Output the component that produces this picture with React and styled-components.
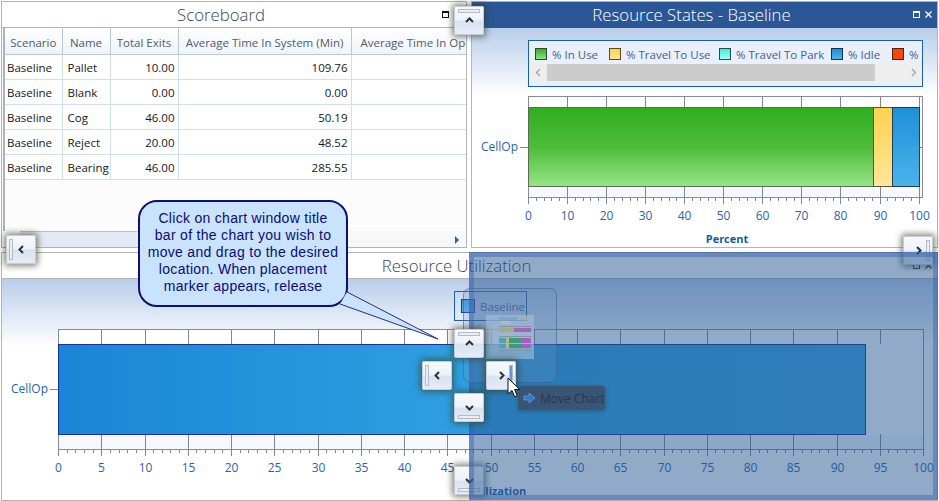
import React from 'react';
import styled, { createGlobalStyle } from 'styled-components';

const UI_FONT = '"Open Sans", "Noto Sans", sans-serif';

const GlobalStyle = createGlobalStyle`
  html, body {
    margin: 0;
    padding: 0;
    background: #fff;
  }
  #root {
    width: 939px;
    height: 501px;
    overflow: hidden;
  }
`;

const Page = styled.div`
  position: relative;
  width: 939px;
  height: 501px;
  box-sizing: border-box;
  padding: 1px 1px 0 1px;
  display: grid;
  grid-template-columns: 470px 467px;
  grid-template-rows: 247px 249px;
  row-gap: 4px;
  font-family: ${UI_FONT};
  overflow: hidden;
`;

const Panel = styled.section`
  display: flex;
  flex-direction: column;
  min-width: 0;
  box-sizing: border-box;
  border: 1px solid #b4b4b4;
  grid-column: ${({ $wide }) => ($wide ? '1 / span 2' : 'auto')};
  margin-right: ${({ $gutter }) => ($gutter ? '4px' : '0')};
  overflow: hidden;
  background: #fff;
`;

const TitleBar = styled.header`
  position: relative;
  flex: 0 0 26px;
  box-sizing: border-box;
  padding-right: 26px;
  display: flex;
  align-items: center;
  justify-content: center;
  font-size: 16.8px;
  font-weight: 300;
  color: ${({ $active }) => ($active ? '#fff' : '#3c4450')};
  background: ${({ $active }) => ($active ? '#2b5797' : '#fff')};
  border-bottom: 1px solid ${({ $active }) => ($active ? '#2b5797' : '#b4b4b4')};
`;

const WindowIcons = styled.div`
  position: absolute;
  right: ${({ $right }) => $right}px;
  top: 9px;
  display: flex;
  gap: 5px;
  align-items: center;
`;

const ChartBody = styled.div`
  flex: 1;
  min-height: 0;
  display: flex;
  flex-direction: column;
  background: linear-gradient(#b9cde9 0, #dfe8f6 36px, #fff 68px);
`;

const TableBody = styled.div`
  flex: 1;
  min-height: 0;
  display: flex;
  flex-direction: column;
  background: #fcfcfd;
`;

const TableClip = styled.div`
  flex: 1;
  min-height: 0;
  overflow: hidden;
  margin-left: 1px;
  border-left: 2px solid #a9b2bd;
`;

const Table = styled.table`
  border-collapse: collapse;
  table-layout: fixed;
  width: 649px;
  font-size: 11.5px;
`;

const HeadCell = styled.th`
  height: 26px;
  box-sizing: border-box;
  padding: 3px 0 0;
  font-weight: 400;
  color: #4f5b6c;
  text-align: ${({ $left }) => ($left ? 'left' : 'center')};
  padding-left: ${({ $left }) => ($left ? '9px' : '0')};
  white-space: nowrap;
  overflow: hidden;
  background: linear-gradient(#fff, #eef3fb);
  border-right: 1px solid #b9c8dc;
  border-bottom: 1px solid #b9c8dc;
`;

const Cell = styled.td`
  height: 25px;
  box-sizing: border-box;
  padding: 2px 3px 0 ${({ $inset }) => $inset || 3}px;
  color: #14171c;
  background: #fff;
  white-space: nowrap;
  overflow: hidden;
  text-align: ${({ $num }) => ($num ? 'right' : 'left')};
  border-right: 1px solid #cfe0f5;
  border-bottom: 1px solid #cfe0f5;
`;

const HScroll = styled.div`
  flex: 0 0 15px;
  display: flex;
  align-items: center;
  justify-content: flex-end;
  padding-right: 6px;
  margin-left: 18px;
  background: linear-gradient(90deg, #e3eaf5 0, #e3eaf5 26%, #f6f9fc 27%);
  border-top: 1px solid #b3c0d6;
  border-image: linear-gradient(90deg, #b3c0d6 26%, transparent 27%) 1;
`;

const LegendBox = styled.div`
  flex: none;
  align-self: flex-start;
  width: 395px;
  height: 47px;
  box-sizing: border-box;
  margin: 12px 0 0 56px;
  border: 1px solid #1b5fa8;
  background: #e9f0fb;
  overflow: hidden;
`;

const LegendRow = styled.div`
  display: flex;
  align-items: center;
  height: 23px;
  padding: 3px 0 0 6px;
  box-sizing: border-box;
  white-space: nowrap;
`;

const LegendItem = styled.span`
  display: inline-flex;
  align-items: center;
  gap: 5px;
  flex: 0 0 ${({ $w }) => $w}px;
  font-size: 11.5px;
  color: #3f5f9a;
`;

const Swatch = styled.i`
  display: block;
  flex: none;
  width: ${({ $size }) => $size || 10}px;
  height: ${({ $size }) => $size || 10}px;
  border: 1px solid ${({ $edge }) => $edge};
  background: linear-gradient(${({ $from }) => $from}, ${({ $to }) => $to});
`;

const LegendScroll = styled.div`
  height: 17px;
  margin: 0 1px;
  display: flex;
  align-items: center;
  justify-content: space-between;
  background: #eee;
`;

const LegendThumb = styled.div`
  width: 329px;
  height: 17px;
  background: #ccc;
`;

const SeriesKey = styled.div`
  position: absolute;
  left: 454px;
  top: 291px;
  width: 73px;
  height: 30px;
  box-sizing: border-box;
  border: 1px solid #1b5fa8;
  display: flex;
  align-items: center;
  gap: 5px;
  padding-left: 6px;
  font-size: 11.5px;
  color: #3f5f9a;
`;

const ChartHolder = styled.div`
  flex: none;
  margin-top: ${({ $top }) => $top}px;
`;

const PlacementPreview = styled.div`
  position: absolute;
  left: 469px;
  top: 252px;
  width: 469px;
  height: 248px;
  box-sizing: border-box;
  border: 5px solid rgba(46, 92, 165, 0.72);
  background: rgba(35, 85, 145, 0.5);
  background-clip: padding-box;
`;

const CompassPlate = styled.div`
  position: absolute;
  left: 463px;
  top: 288px;
  width: 94px;
  height: 95px;
  box-sizing: border-box;
  border: 1px solid rgba(60, 95, 145, 0.55);
  border-radius: 7px;
  background: rgba(110, 150, 195, 0.22);
`;

const Thumbnail = styled.svg`
  position: absolute;
  left: 486px;
  top: 315px;
`;

const DockButton = styled.button`
  position: absolute;
  left: ${({ $x }) => $x}px;
  top: ${({ $y }) => $y}px;
  width: 30px;
  height: 29px;
  padding: 0;
  box-sizing: border-box;
  display: flex;
  align-items: center;
  justify-content: center;
  border: 1px solid #f4f6fa;
  border-radius: 2px;
  outline: 1px solid #c4ccd8;
  outline-offset: -1px;
  background: linear-gradient(#f6f8fd 0, #eef2fa 48%, #d9e2f1 52%, #e6ecf7 100%);
  box-shadow: 0 0 6px 2px rgba(55, 60, 30, 0.62);
`;

const DockBar = styled.i`
  position: absolute;
  box-sizing: border-box;
  border: 1px solid #b7bcc4;
  background: ${({ $hot }) => ($hot ? '#5f97e0' : '#e9edf4')};
  ${({ $side }) =>
    $side === 'top' ? 'left: 3px; right: 3px; top: 2px; height: 4px;' : ''}
  ${({ $side }) =>
    $side === 'bottom' ? 'left: 3px; right: 3px; bottom: 2px; height: 4px;' : ''}
  ${({ $side }) =>
    $side === 'left' ? 'top: 3px; bottom: 3px; left: 2px; width: 4px;' : ''}
  ${({ $side }) =>
    $side === 'right' ? 'top: 3px; bottom: 3px; right: 2px; width: 4px;' : ''}
`;

const MoveTip = styled.div`
  position: absolute;
  left: 518px;
  top: 386px;
  width: 87px;
  height: 24px;
  box-sizing: border-box;
  display: flex;
  align-items: center;
  gap: 4px;
  padding-left: 5px;
  border-radius: 3px;
  background: #3a5474;
  box-shadow: 0 1px 4px rgba(40, 50, 60, 0.45);
  font-size: 12px;
  color: #223a58;
`;

const Pointer = styled.svg`
  position: absolute;
  left: 507px;
  top: 377px;
`;

const Callout = styled.div`
  position: absolute;
  left: 138px;
  top: 200px;
  width: 210px;
  height: 107px;
  box-sizing: border-box;
  padding-bottom: 3px;
  display: flex;
  align-items: center;
  justify-content: center;
  text-align: center;
  border: 2px solid #10106e;
  border-radius: 19px;
  background: #c9e3fc;
  font-family: "Liberation Sans", Arial, sans-serif;
  font-size: 14px;
  letter-spacing: 0.3px;
  line-height: 17px;
  color: #0c0c72;
`;

const CalloutTail = styled.svg`
  position: absolute;
  left: 336px;
  top: 288px;
`;

const rows = [
  ['Baseline', 'Pallet', '10.00', '109.76'],
  ['Baseline', 'Blank', '0.00', '0.00'],
  ['Baseline', 'Cog', '46.00', '50.19'],
  ['Baseline', 'Reject', '20.00', '48.52'],
  ['Baseline', 'Bearing', '46.00', '285.55'],
];

const legend = [
  ['% In Use', 74, '#35ab25', '#93e183', '#2c4a28'],
  ['% Travel To Use', 110, '#ffd24d', '#ffe596', '#5a4a20'],
  ['% Travel To Park', 112, '#3fe8dc', '#a2fff8', '#2a4a4a'],
  ['% Idle', 61, '#1f8fd8', '#4ab4ea', '#12304c'],
  ['%', 30, '#f5460c', '#f5460c', '#55200c'],
];

const RestoreIcon = ({ color }) => (
  <svg width="7" height="7" viewBox="0 0 7 7" style={{ display: 'block' }}>
    <rect x="0.5" y="0.5" width="6" height="6" fill="none" stroke={color} />
    <rect x="0" y="0" width="7" height="2" fill={color} />
  </svg>
);

const CloseIcon = ({ color }) => (
  <svg width="7" height="7" viewBox="0 0 7 7" style={{ display: 'block' }}>
    <path d="M.5.5l6 6M6.5.5l-6 6" stroke={color} strokeWidth="1.3" fill="none" />
  </svg>
);

const Chevron = ({ dir }) => {
  const paths = {
    up: 'M1 6 L4.5 2.5 L8 6',
    down: 'M1 3 L4.5 6.5 L8 3',
    left: 'M6 1 L2.5 4.5 L6 8',
    right: 'M3 1 L6.5 4.5 L3 8',
  };
  return (
    <svg width="9" height="9" viewBox="0 0 9 9">
      <path d={paths[dir]} fill="none" stroke="#2c3138" strokeWidth="2" />
    </svg>
  );
};

const Dock = ({ x, y, dir, side, hot }) => (
  <DockButton $x={x} $y={y} aria-label={`Dock ${side}`}>
    <DockBar $side={side} $hot={hot} />
    <Chevron dir={dir} />
  </DockButton>
);

// horizontal bar chart: ox is the plot's left edge, the plot starts at the svg's top
const BarChart = ({ w, h, ox, plotW, plotH, band, step, unit, segments, horizontal, axisTitle, titleShift }) => {
  const max = 100;
  const majors = [];
  for (let v = 0; v <= max; v += step) majors.push(v);
  const minors = [];
  for (let v = 0; v < max; v += step / 5) {
    if (Math.round(v / (step / 5)) % 5 !== 0) minors.push(v);
  }
  const px = (v) => Math.round(ox + v * unit) + 0.5;
  const bottom = plotH;
  const barTop = band;
  const barBottom = bottom - band;
  const mid = Math.round((barTop + barBottom) / 2);

  return (
    <svg width={w} height={h} style={{ display: 'block', fontFamily: UI_FONT }}>
      <defs>
        {segments.map((s) => (
          <linearGradient key={s.id} id={s.id} x1="0" y1="0" x2={horizontal ? '1' : '0'} y2={horizontal ? '0' : '1'}>
            {s.stops.map(([o, c]) => (
              <stop key={o} offset={o} stopColor={c} />
            ))}
          </linearGradient>
        ))}
      </defs>
      <rect x={ox + 0.5} y={0.5} width={plotW} height={band} fill="#fff" />
      <rect x={ox + 0.5} y={barBottom + 0.5} width={plotW} height={band} fill="#f5f9fd" />
      {majors.map((v) => (
        <g key={v} stroke="#7f8790">
          <line x1={px(v)} x2={px(v)} y1={0} y2={barTop} />
          <line x1={px(v)} x2={px(v)} y1={barBottom} y2={bottom + 7} />
        </g>
      ))}
      {minors.map((v) => (
        <line key={v} x1={px(v)} x2={px(v)} y1={bottom} y2={bottom + 4} stroke="#7f8790" />
      ))}
      <rect x={ox + 0.5} y={0.5} width={plotW} height={plotH} fill="none" stroke="#858c95" />
      {segments.map((s) => (
        <rect
          key={s.id}
          x={px(s.from)}
          y={barTop + 0.5}
          width={px(s.to) - px(s.from)}
          height={barBottom - barTop}
          fill={`url(#${s.id})`}
          stroke={s.edge}
        />
      ))}
      <line x1={ox - 8} x2={ox} y1={mid + 0.5} y2={mid + 0.5} stroke="#7f8790" />
      <line x1={px(100)} x2={ox + plotW} y1={mid + 0.5} y2={mid + 0.5} stroke="#7f8790" />
      <text x={ox - 10} y={mid + 4} textAnchor="end" fontSize="12" fill="#1f66ad">CellOp</text>
      {majors.map((v) => (
        <text key={v} x={px(v)} y={bottom + 23} textAnchor="middle" fontSize="12" fill="#1f66ad">{v}</text>
      ))}
      <text x={ox + plotW / 2 + titleShift} y={bottom + 46} textAnchor="middle" fontSize="11" fontWeight="700" fill="#17599f">{axisTitle}</text>
    </svg>
  );
};

const Thumb = () => (
  <Thumbnail width="48" height="44" viewBox="0 0 48 44">
    <rect width="48" height="44" fill="#a9bfd6" opacity="0.6" />
    <rect x="13" y="2" width="18" height="3" fill="#7fa0bd" opacity="0.8" />
    <rect x="36" y="2" width="8" height="3" fill="#a9b28c" opacity="0.8" />
    <rect x="15" y="6" width="9" height="3" fill="#b4bcc6" opacity="0.8" />
    <line x1="13" x2="46" y1="11.5" y2="11.5" stroke="#7f95aa" />
    <rect x="13" y="13" width="15" height="4" fill="#a5ad7d" />
    <rect x="28" y="13" width="17" height="4" fill="#a264ba" />
    <line x1="13" x2="46" y1="21.5" y2="21.5" stroke="#7f95aa" />
    <rect x="13" y="23" width="7" height="5" fill="#4da0c0" />
    <rect x="20" y="23" width="3" height="5" fill="#b8b884" />
    <rect x="23" y="23" width="12" height="5" fill="#3f9a7c" />
    <rect x="35" y="23" width="10" height="5" fill="#a264ba" />
    <rect x="13" y="29" width="7" height="4" fill="#4da0c0" />
    <rect x="20" y="29" width="3" height="4" fill="#b8b884" />
    <rect x="23" y="29" width="12" height="4" fill="#3f9a7c" />
    <rect x="35" y="29" width="10" height="4" fill="#a264ba" />
    <line x1="13" x2="46" y1="35.5" y2="35.5" stroke="#7f95aa" />
  </Thumbnail>
);

const App = () => (
  <>
    <GlobalStyle />
    <Page>
      <Panel $gutter>
        <TitleBar>
          Scoreboard
          <WindowIcons $right={17}>
            <RestoreIcon color="#111" />
          </WindowIcons>
        </TitleBar>
        <TableBody>
          <TableClip>
            <Table>
              <colgroup>
                <col style={{ width: 57 }} />
                <col style={{ width: 48 }} />
                <col style={{ width: 68 }} />
                <col style={{ width: 173 }} />
                <col style={{ width: 303 }} />
              </colgroup>
              <thead>
                <tr>
                  <HeadCell>Scenario</HeadCell>
                  <HeadCell>Name</HeadCell>
                  <HeadCell>Total Exits</HeadCell>
                  <HeadCell>Average Time In System (Min)</HeadCell>
                  <HeadCell $left>Average Time In Operation (Min)</HeadCell>
                </tr>
              </thead>
              <tbody>
                {rows.map((r) => (
                  <tr key={r[1]}>
                    <Cell $inset={2}>{r[0]}</Cell>
                    <Cell $inset={5}>{r[1]}</Cell>
                    <Cell $num>{r[2]}</Cell>
                    <Cell $num>{r[3]}</Cell>
                    <Cell />
                  </tr>
                ))}
              </tbody>
            </Table>
          </TableClip>
          <HScroll>
            <svg width="5" height="8" viewBox="0 0 5 8">
              <path d="M0 0l4 4-4 4z" fill="#3d5a80" />
            </svg>
          </HScroll>
        </TableBody>
      </Panel>

      <Panel>
        <TitleBar $active>
          Resource States - Baseline
          <WindowIcons $right={5}>
            <RestoreIcon color="#fff" />
            <CloseIcon color="#fff" />
          </WindowIcons>
        </TitleBar>
        <ChartBody>
          <LegendBox>
            <LegendRow>
              {legend.map(([name, w, from, to, edge]) => (
                <LegendItem key={name} $w={w}>
                  <Swatch $from={from} $to={to} $edge={edge} />
                  {name}
                </LegendItem>
              ))}
            </LegendRow>
            <LegendScroll>
              <svg width="17" height="17" viewBox="0 0 17 17">
                <path d="M10 5l-3.5 3.5L10 12" fill="none" stroke="#a8a8a8" strokeWidth="1.4" />
              </svg>
              <LegendThumb />
              <svg width="46" height="17" viewBox="0 0 46 17">
                <path d="M37 5l3.5 3.5L37 12" fill="none" stroke="#a8a8a8" strokeWidth="1.4" />
              </svg>
            </LegendScroll>
          </LegendBox>
          <ChartHolder $top={9}>
            <BarChart
              w={465}
              h={150}
              ox={56}
              plotW={394}
              plotH={101}
              band={11}
              step={10}
              unit={3.906}
              axisTitle="Percent"
              titleShift={2}
              segments={[
                { id: 'inUse', from: 0, to: 88.2, edge: '#5e6b58', stops: [['0', '#2fae1f'], ['0.5', '#4ebc3b'], ['1', '#98e488']] },
                { id: 'travel', from: 88.2, to: 93.3, edge: '#5a5236', stops: [['0', '#ffd24d'], ['1', '#ffe69a']] },
                { id: 'idle', from: 93.3, to: 100, edge: '#1d3d55', stops: [['0', '#1f8fd8'], ['1', '#4ab4ea']] },
              ]}
            />
          </ChartHolder>
        </ChartBody>
      </Panel>

      <Panel $wide>
        <TitleBar>
          Resource Utilization
          <WindowIcons $right={5}>
            <RestoreIcon color="#333" />
            <CloseIcon color="#333" />
          </WindowIcons>
        </TitleBar>
        <ChartBody>
          <ChartHolder $top={50}>
            <BarChart
              w={936}
              h={170}
              ox={56}
              plotW={865}
              plotH={120}
              band={15}
              step={5}
              unit={8.65}
              axisTitle="Utilization"
              titleShift={7}
              horizontal
              segments={[
                { id: 'util', from: 0, to: 93.3, edge: '#1c2f9a', stops: [['0', '#1a85d6'], ['0.5', '#2f9fe0'], ['1', '#3aa6e4']] },
              ]}
            />
          </ChartHolder>
        </ChartBody>
      </Panel>

      <SeriesKey>
        <Swatch $from="#3f97d8" $to="#5fb0e4" $edge="#1c2f9a" $size={12} />
        Baseline
      </SeriesKey>

      <Dock x={454} y={6} dir="up" side="top" />
      <Dock x={6} y={235} dir="left" side="left" />
      <Dock x={903} y={236} dir="right" side="right" />
      <Dock x={454} y={466} dir="down" side="bottom" />

      <PlacementPreview />
      <CompassPlate />
      <Thumb />

      <Dock x={454} y={329} dir="up" side="top" />
      <Dock x={422} y={361} dir="left" side="left" />
      <Dock x={486} y={361} dir="right" side="right" hot />
      <Dock x={454} y={393} dir="down" side="bottom" />

      <MoveTip>
        <svg width="13" height="12" viewBox="0 0 13 12">
          <path d="M1 4h5V1l6 5-6 5V8H1z" fill="#2a7ad0" stroke="#7fb0e8" strokeWidth="0.6" />
        </svg>
        Move Chart
      </MoveTip>

      <Pointer width="14" height="22" viewBox="0 0 14 22">
        <path d="M1 1v16l4-3.6 2.6 6.4 2.6-1.1-2.6-6.2h5z" fill="#fff" stroke="#111" strokeWidth="1" />
      </Pointer>

      <Callout>
        <span>
          Click on chart window title
          <br />
          bar of the chart you wish to
          <br />
          move and drag to the desired
          <br />
          location. When placement
          <br />
          marker appears, release
        </span>
      </Callout>
      <CalloutTail width="106" height="54" viewBox="0 0 106 54">
        <path d="M11 4 L102 51 L4 16 Z" fill="#c9e3fc" />
        <path d="M11 4 L102 51 L4 16" fill="none" stroke="#2c2c7e" strokeWidth="1" />
      </CalloutTail>
    </Page>
  </>
);

export default App;
